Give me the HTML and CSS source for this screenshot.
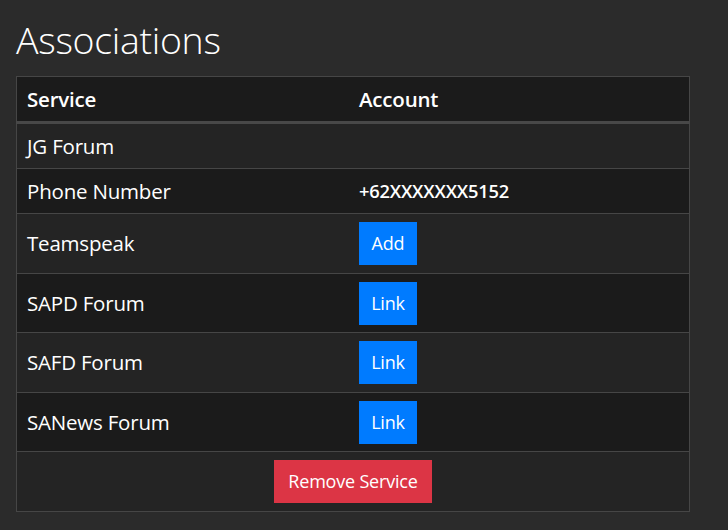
FILE: index.html
```
<!DOCTYPE html>
<html>
<head>
<meta charset="utf-8">
<link rel="stylesheet" href="styles.css">
</head>
<body>
<h1 class="title">Associations</h1>
<table class="assoc">
  <thead>
    <tr><th class="col-service">Service</th><th>Account</th></tr>
  </thead>
  <tbody>
    <tr class="light"><td>JG Forum</td><td></td></tr>
    <tr class="dark"><td>Phone Number</td><td class="acct">+62XXXXXXX5152</td></tr>
    <tr class="light"><td>Teamspeak</td><td class="btn-cell"><button class="btn btn-blue btn-small">Add</button></td></tr>
    <tr class="dark"><td>SAPD Forum</td><td class="btn-cell"><button class="btn btn-blue btn-small">Link</button></td></tr>
    <tr class="light"><td>SAFD Forum</td><td class="btn-cell"><button class="btn btn-blue btn-small">Link</button></td></tr>
    <tr class="dark"><td>SANews Forum</td><td class="btn-cell"><button class="btn btn-blue btn-small">Link</button></td></tr>
    <tr class="light"><td colspan="2" class="center btn-cell"><button class="btn btn-red">Remove Service</button></td></tr>
  </tbody>
</table>
</body>
</html>
```
FILE: styles.css
```
html, body {
  margin: 0;
  padding: 0;
  background: #2b2b2b;
}
body {
  padding: 16px;
  font-family: "Open Sans", "Noto Sans", sans-serif;
  color: #fff;
}
.title {
  margin: 0 0 12px 0;
  font-size: 37.5px;
  font-weight: 300;
  line-height: 48px;
  letter-spacing: -0.3px;
}
.assoc {
  width: 674px;
  border-collapse: collapse;
  border: 1px solid #464646;
  font-size: 20.5px;
}
.assoc th {
  background: #1b1b1b;
  text-align: left;
  font-weight: 600;
  padding: 8px 10px;
  line-height: 28px;
  border-bottom: 3px solid #484848;
  letter-spacing: -0.2px;
}
.col-service {
  width: 312px;
}
.assoc td {
  padding: 8px 10px;
  line-height: 28px;
  border-top: 1px solid #464646;
  vertical-align: middle;
  letter-spacing: -0.2px;
}
.assoc td.btn-cell {
  padding-top: 8px;
  padding-bottom: 7.5px;
  line-height: 0;
}
.light td { background: #242424; }
.dark td { background: #1b1b1b; }
.acct {
  font-weight: 600;
  font-size: 18.3px;
}
.center { text-align: center; }
.btn {
  display: inline-block;
  border: 0;
  border-radius: 0;
  color: #fff;
  font-family: "Open Sans", "Noto Sans", sans-serif;
  font-size: 18px;
  line-height: 27px;
  padding: 8px 14px;
  text-align: center;
  vertical-align: top;
  letter-spacing: -0.2px;
}
.btn-small {
  width: 58px;
  padding-left: 0;
  padding-right: 0;
}
.btn-blue { background: #007bff; }
.btn-red { background: #dc3545; }
```
